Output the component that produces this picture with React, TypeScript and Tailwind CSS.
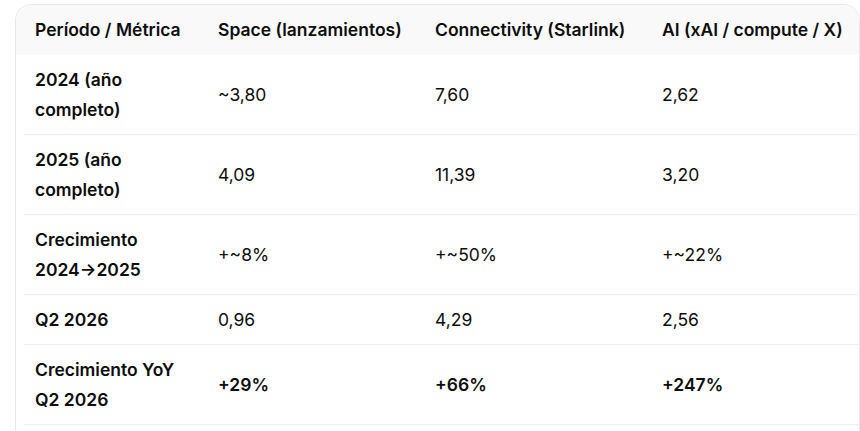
import React from "react";

const rows: { label: string[]; cells: string[]; bold?: boolean }[] = [
  { label: ["2024 (año", "completo)"], cells: ["~3,80", "7,60", "2,62"] },
  { label: ["2025 (año", "completo)"], cells: ["4,09", "11,39", "3,20"] },
  { label: ["Crecimiento", "2024→2025"], cells: ["+~8%", "+~50%", "+~22%"] },
  { label: ["Q2 2026"], cells: ["0,96", "4,29", "2,56"] },
  { label: ["Crecimiento YoY", "Q2 2026"], cells: ["+29%", "+66%", "+247%"], bold: true },
];

const cols = "grid grid-cols-[183px_217px_227px_1fr]";

export default function App() {
  return (
    <div className="w-[860px] h-[431px] overflow-hidden bg-white text-[#0d0d0d] [font-family:Inter,'Noto_Sans',sans-serif] text-[17.5px]">
      <div className="ml-[15px] mt-[4px] w-[845px] h-[440px] border border-[#e8e8e8] rounded-t-[16px] overflow-hidden">
        <div className={`${cols} h-[50px] items-center bg-[#f9f9f9] pl-[8px] font-semibold leading-[30px] whitespace-nowrap`}>
          <div className="pl-[11px]">Período / Métrica</div>
          <div className="pl-[11px]">Space (lanzamientos)</div>
          <div className="pl-[11px]">Connectivity (Starlink)</div>
          <div className="pl-[11px]">AI (xAI / compute / X)</div>
        </div>
        <div className="ml-[8px]">
          {rows.map((r, i) => (
            <div
              key={i}
              className={`${cols} items-center border-b border-[#ececec] pt-[10px] pb-[9px] leading-[30px]`}
            >
              <div className="pl-[11px] font-semibold whitespace-nowrap">
                {r.label.map((l, j) => (
                  <div key={j}>{l}</div>
                ))}
              </div>
              {r.cells.map((c, j) => (
                <div key={j} className={`pl-[11px] ${r.bold ? "font-semibold" : ""}`}>
                  {c}
                </div>
              ))}
            </div>
          ))}
        </div>
      </div>
    </div>
  );
}
